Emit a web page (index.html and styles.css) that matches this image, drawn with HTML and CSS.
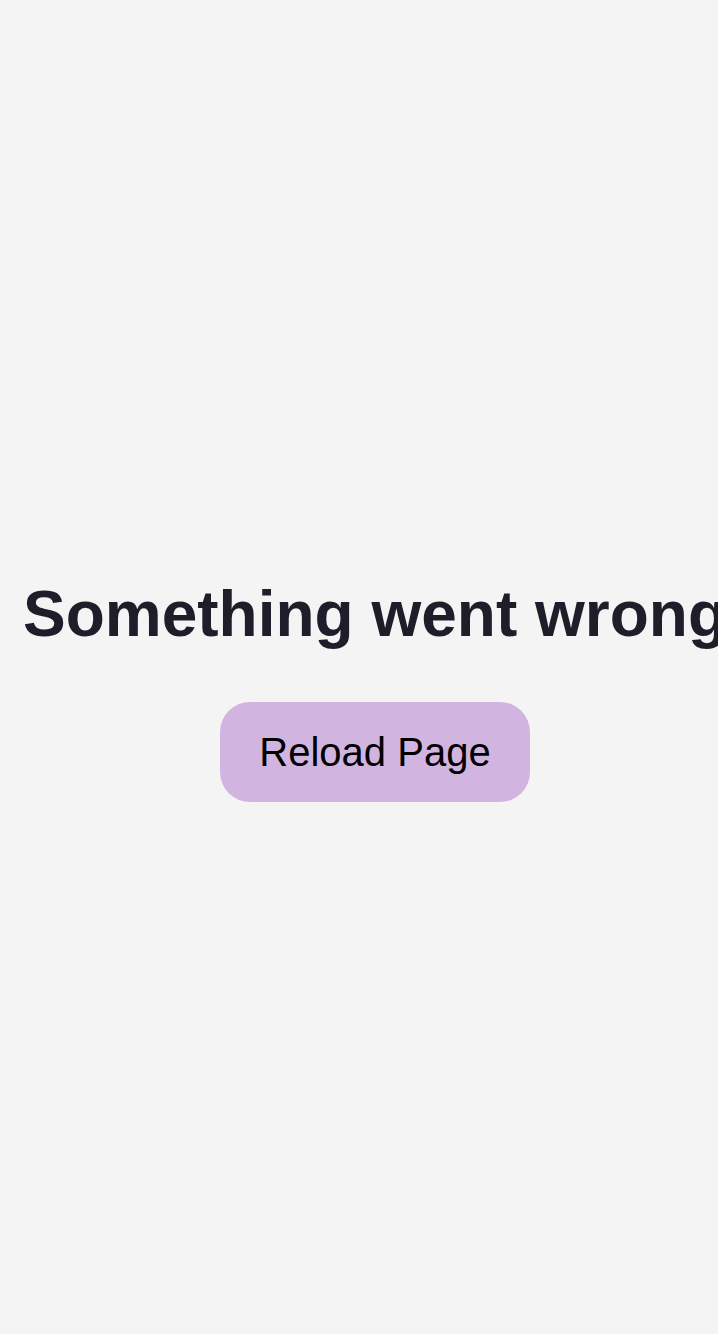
FILE: index.html
```html
<!DOCTYPE html>
<html lang="en">
<head>
<meta charset="utf-8">
<title>Error</title>
<link rel="stylesheet" href="styles.css">
</head>
<body>
<main class="error">
  <h1 class="error__title">Something went wrong</h1>
  <button class="error__button" type="button">Reload Page</button>
</main>
</body>
</html>
```

FILE: styles.css
```css
html, body {
  margin: 0;
  padding: 0;
  background: #f4f4f4;
  overflow: hidden;
}
body {
  width: 718px;
  height: 1334px;
  font-family: "Liberation Sans", Arial, sans-serif;
}
.error {
  width: 750px;
  box-sizing: border-box;
  padding-top: 577px;
  display: flex;
  flex-direction: column;
  align-items: center;
}
.error__title {
  margin: 0 0 51px;
  font-size: 64px;
  font-weight: 700;
  line-height: 74px;
  color: #1e1d2a;
  white-space: nowrap;
}
.error__button {
  width: 310px;
  height: 100px;
  border: 0;
  border-radius: 30px;
  background: #d2b4e1;
  color: #000;
  font-family: "Liberation Sans", Arial, sans-serif;
  font-size: 40px;
  padding: 0;
  cursor: pointer;
}
```
